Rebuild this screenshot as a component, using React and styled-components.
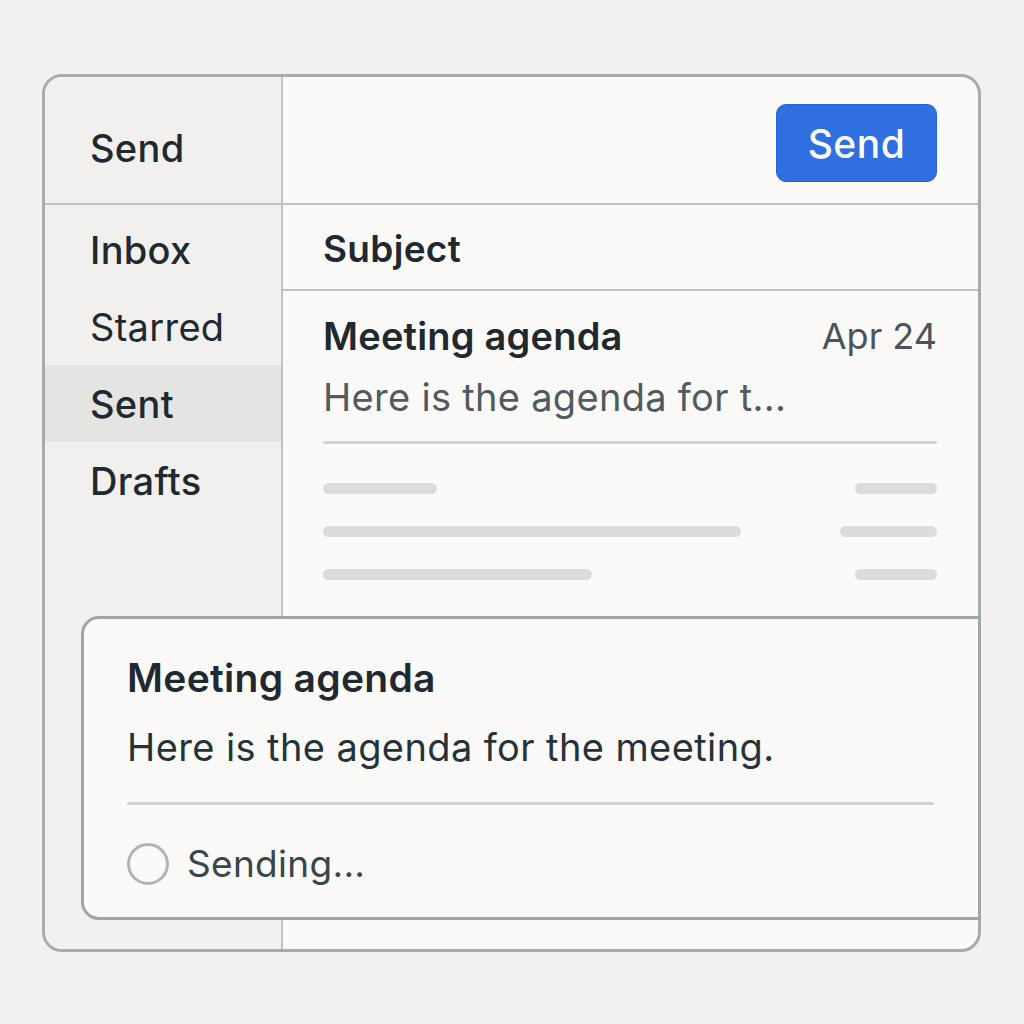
import React from "react";
import styled, { createGlobalStyle } from "styled-components";

const GlobalStyle = createGlobalStyle`
  html, body {
    margin: 0;
    padding: 0;
    background: #f2f1ef;
    font-family: Inter, "Noto Sans", sans-serif;
    color: #1f292f;
  }
`;

const Page = styled.div`
  width: 1024px;
  height: 1024px;
  padding: 74px 0 0 42px;
  box-sizing: border-box;
`;

const Window = styled.div`
  position: relative;
  width: 939px;
  height: 878px;
  box-sizing: border-box;
`;

const Frame = styled.div`
  width: 100%;
  height: 100%;
  box-sizing: border-box;
  border: 3px solid #a6abae;
  border-radius: 20px;
  overflow: hidden;
  display: grid;
  grid-template-columns: 238px 1fr;
  grid-template-rows: 128px 1fr;
  background: #fbfaf8;
`;

const SideHeader = styled.div`
  background: #f1f0ee;
  border-right: 2px solid #c0c3c5;
  border-bottom: 2px solid #c0c3c5;
  display: flex;
  align-items: center;
  padding-left: 45px;
  font-size: 38px;
  font-weight: 500;
  letter-spacing: 0.3px;
  padding-top: 16px;
`;

const TopBar = styled.div`
  border-bottom: 2px solid #c0c3c5;
  display: flex;
  justify-content: flex-end;
  align-items: flex-start;
  padding: 27px 41px 0 0;
`;

const SendButton = styled.button`
  width: 161px;
  height: 78px;
  border: 1px solid #2563d4;
  border-radius: 10px;
  background: #2f6fdf;
  color: #fff;
  font-family: Inter, sans-serif;
  font-size: 39px;
  font-weight: 500;
  letter-spacing: 0.5px;
  padding: 0;
`;

const Sidebar = styled.nav`
  background: #f1f0ee;
  border-right: 2px solid #c0c3c5;
  padding-top: 6px;
`;

const NavItem = styled.div`
  height: 77px;
  display: flex;
  align-items: center;
  padding-left: 45px;
  font-size: 38px;
  letter-spacing: 0.3px;
  font-weight: ${({ weight }) => weight || 400};
  color: #1f292f;
  background: ${({ active }) => (active ? "#e4e4e2" : "transparent")};
`;

const Main = styled.div`
  display: flex;
  flex-direction: column;
`;

const SubjectRow = styled.div`
  height: 86px;
  border-bottom: 2px solid #c0c3c5;
  display: flex;
  align-items: center;
  padding-left: 40px;
  padding-top: 2px;
  box-sizing: border-box;
  font-size: 37px;
  font-weight: 600;
  letter-spacing: 0.3px;
`;

const Message = styled.div`
  padding: 20px 41px 0 40px;
`;

const MsgTop = styled.div`
  display: flex;
  justify-content: space-between;
  align-items: center;
  height: 50px;
`;

const MsgTitle = styled.div`
  font-size: 38px;
  font-weight: 600;
  letter-spacing: 0.2px;
  color: #1f292f;
`;

const MsgDate = styled.div`
  font-size: 36px;
  font-weight: 400;
  color: #4b545a;
`;

const Preview = styled.div`
  font-size: 38px;
  letter-spacing: 0.3px;
  color: #505a60;
  height: 60px;
  display: flex;
  align-items: center;
  margin-top: 6px;
`;

const Rule = styled.div`
  height: 3px;
  border-radius: 2px;
  background: #d0d1d1;
  margin-top: ${({ gap }) => gap || 0}px;
`;

const SkeletonList = styled.div`
  display: flex;
  flex-direction: column;
  gap: 32px;
  padding-top: 39px;
`;

const SkeletonRow = styled.div`
  display: flex;
  justify-content: space-between;
`;

const Bar = styled.div`
  height: 11px;
  border-radius: 6px;
  background: #dcdcdb;
  width: ${({ w }) => w}px;
`;

const Popup = styled.div`
  position: absolute;
  left: 39px;
  top: 542px;
  right: 0;
  height: 304px;
  box-sizing: border-box;
  background: #fbfaf8;
  border: 3px solid #9fa5a9;
  border-radius: 18px 0 0 18px;
  padding: 32px 44px 0 43px;
`;

const PopTitle = styled.div`
  font-size: 39px;
  font-weight: 600;
  letter-spacing: 0.3px;
  color: #1f292f;
  height: 52px;
  display: flex;
  align-items: center;
`;

const PopBody = styled.div`
  font-size: 38px;
  letter-spacing: 0.4px;
  color: #26323a;
  height: 52px;
  display: flex;
  align-items: center;
  margin-top: 18px;
`;

const Status = styled.div`
  display: flex;
  align-items: center;
  gap: 18px;
  margin-top: 36px;
  font-size: 37px;
  letter-spacing: 0.3px;
  color: #3a454c;
`;

const Spinner = styled.div`
  width: 36px;
  height: 36px;
  border: 3px solid #b0b4b6;
  border-radius: 50%;
`;

const skeleton = [
  [114, 82],
  [418, 97],
  [269, 82],
];

const App = () => {
  return (
    <>
      <GlobalStyle />
      <Page>
        <Window>
          <Frame>
            <SideHeader>Send</SideHeader>
            <TopBar>
              <SendButton>Send</SendButton>
            </TopBar>
            <Sidebar>
              <NavItem weight={500}>Inbox</NavItem>
              <NavItem>Starred</NavItem>
              <NavItem active weight={500}>Sent</NavItem>
              <NavItem weight={500}>Drafts</NavItem>
            </Sidebar>
            <Main>
              <SubjectRow>Subject</SubjectRow>
              <Message>
                <MsgTop>
                  <MsgTitle>Meeting agenda</MsgTitle>
                  <MsgDate>Apr 24</MsgDate>
                </MsgTop>
                <Preview>Here is the agenda for t...</Preview>
                <Rule gap={14} />
                <SkeletonList>
                  {skeleton.map(([l, r], i) => (
                    <SkeletonRow key={i}>
                      <Bar w={l} />
                      <Bar w={r} />
                    </SkeletonRow>
                  ))}
                </SkeletonList>
              </Message>
            </Main>
          </Frame>
          <Popup>
            <PopTitle>Meeting agenda</PopTitle>
            <PopBody>Here is the agenda for the meeting.</PopBody>
            <Rule gap={29} />
            <Status>
              <Spinner />
              Sending...
            </Status>
          </Popup>
        </Window>
      </Page>
    </>
  );
};

export default App;
